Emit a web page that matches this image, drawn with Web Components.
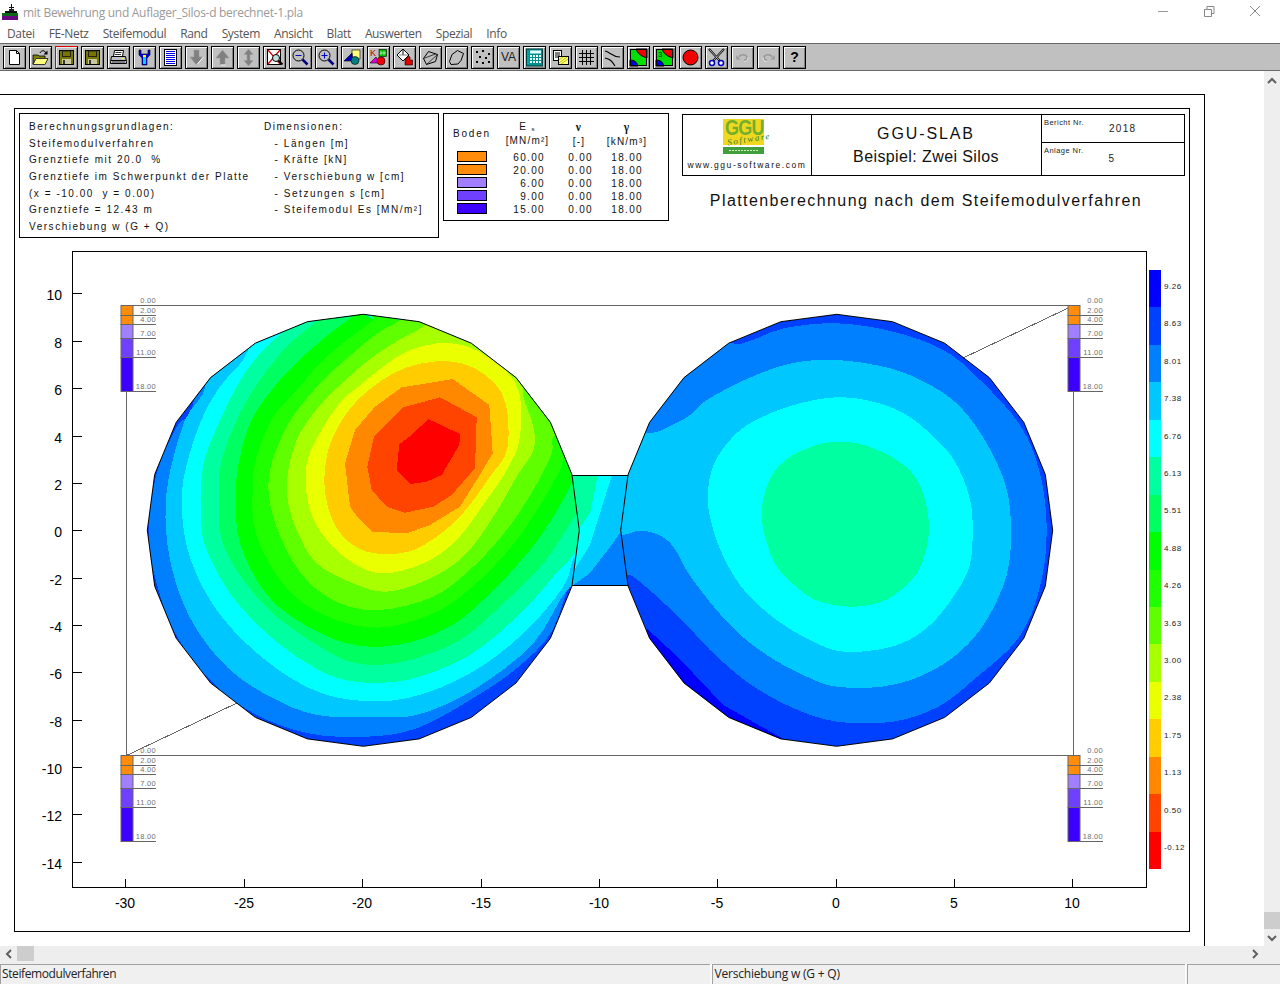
<!DOCTYPE html>
<html lang="de">
<head>
<meta charset="utf-8">
<title>mit Bewehrung und Auflager_Silos-d berechnet-1.pla</title>
<style>
html,body{margin:0;padding:0;height:100%;overflow:hidden;background:#fff}
</style>
</head>
<body>
<app-window>
  <title-bar slot="title" label="mit Bewehrung und Auflager_Silos-d berechnet-1.pla"></title-bar>
  <menu-bar slot="menu">
    <span>Datei</span><span>FE-Netz</span><span>Steifemodul</span><span>Rand</span><span>System</span><span>Ansicht</span><span>Blatt</span><span>Auswerten</span><span>Spezial</span><span>Info</span>
  </menu-bar>
  <tool-bar slot="tools"></tool-bar>
  <drawing-sheet slot="view">
    <info-box></info-box>
    <soil-table></soil-table>
    <title-block></title-block>
    <contour-plot></contour-plot>
  </drawing-sheet>
  <v-scroll slot="vscroll"></v-scroll>
  <h-scroll slot="hscroll"></h-scroll>
  <status-bar slot="status"></status-bar>
</app-window>
<script>
const def=(name,css,html,init)=>{
  customElements.define(name,class extends HTMLElement{
    constructor(){super();const r=this.attachShadow({mode:'open'});
      r.innerHTML='<style>'+css+'</style>'+(typeof html==='function'?html(this):html);}
    connectedCallback(){if(init)init(this);}
  });
};
const UI='"Open Sans","Noto Sans","Liberation Sans",sans-serif';
const AR='"Liberation Sans",Arial,sans-serif';

def('app-window',`:host{display:grid;width:1280px;height:984px;overflow:hidden;background:#fff;
  grid-template-columns:1264px 16px;grid-template-rows:22px 20px 29px 875px 18px 20px;
  grid-template-areas:"t t" "m m" "b b" "v s" "h h" "f f"}
  ::slotted([slot=title]){grid-area:t}::slotted([slot=menu]){grid-area:m}::slotted([slot=tools]){grid-area:b}
  ::slotted([slot=view]){grid-area:v}::slotted([slot=vscroll]){grid-area:s}::slotted([slot=hscroll]){grid-area:h}::slotted([slot=status]){grid-area:f}`,
  `<slot name="title"></slot><slot name="menu"></slot><slot name="tools"></slot><slot name="view"></slot><slot name="vscroll"></slot><slot name="hscroll"></slot><slot name="status"></slot>`);

def('title-bar',`:host{display:flex;align-items:center;background:#fff;font:12px ${UI};color:#9a9a9a;position:relative}
  svg{display:block;margin:1px 5px 0 2px}
  .t{flex:1;white-space:pre;letter-spacing:-.28px;padding-top:2px}
  .c{display:flex;gap:30px;margin-right:17px;align-items:center}`,
  h=>`<svg width="16" height="16" viewBox="0 0 16 16" shape-rendering="crispEdges">
    <rect x="9" y="0" width="1" height="8" fill="#111"/><rect x="7" y="3" width="5" height="1" fill="#111"/>
    <rect x="7" y="5" width="5" height="2" fill="#222"/><rect x="3" y="7" width="12" height="2" fill="#111"/>
    <rect x="0" y="9" width="16" height="3" fill="#0a6a1a"/><rect x="0" y="12" width="16" height="4" fill="#6a0a80"/></svg>
   <span class="t">${h.getAttribute('label')}</span>
   <span class="c">
    <svg width="16" height="16" viewBox="0 0 16 16" style="margin:0"><path d="M3 8.500h10" stroke="#999" fill="none"/></svg>
    <svg width="16" height="16" viewBox="0 0 16 16" style="margin:0"><path d="M3.500 6.500h7v7h-7zM6 6.500V3.500h7v7h-2.500" stroke="#888" fill="none"/></svg>
    <svg width="16" height="16" viewBox="0 0 16 16" style="margin:0"><path d="M3 3l10 10M13 3L3 13" stroke="#888" fill="none"/></svg>
   </span>`);

def('menu-bar',`:host{display:flex;gap:14px;align-items:center;padding:2px 0 0 7px;background:#fff;font:12px ${UI};letter-spacing:-.35px;color:#555;white-space:nowrap}`,`<slot></slot>`);

def('tool-button',`:host{box-sizing:border-box;width:23px;height:23px;border:1px solid #000;background:#c0c0c0;
   box-shadow:inset 1px 1px 0 #fff,inset -1px -1px 0 #808080;display:flex;align-items:center;justify-content:center}
  :host([hot]){border-top-color:#d00;border-left-color:#d00;box-shadow:inset 1px 1px 0 #e8e8e8,inset -1px -1px 0 #808080}`,`<slot></slot>`);

const I=(b)=>`<svg width="19" height="19" viewBox="0 0 19 19">${b}</svg>`;
const floppy=`<rect x="2.500" y="2.500" width="14" height="14" fill="#777700" stroke="#000"/><rect x="5.500" y="3" width="8" height="5.500" fill="#777700" stroke="#222"/><rect x="5" y="11" width="9" height="5" fill="#c8c8a0"/><rect x="6" y="12" width="2" height="4" fill="#333"/>`;
const colorMap=(n)=>`<rect x="1" y="1" width="17" height="17" fill="#00e000"/><path d="M7 1C9 6 12 8 18 10V1z" fill="#f00000" stroke="#000"/><path d="M1 12C5 12 8 14 9 18H1z" fill="#0000e0" stroke="#000"/><rect x="1.500" y="1.500" width="16" height="16" fill="none" stroke="#000"/>${n?'<text x="3" y="9" font-family="Liberation Sans" font-size="8" fill="#003000">3</text>':''}`;
const icons=[
 I(`<path d="M4.500 2.500h7l3 3v11h-10z" fill="#fff" stroke="#000"/><path d="M11.500 2.500v3h3" fill="none" stroke="#000"/>`),
 I(`<path d="M2 7h5l1 1h6v3H5L2 16z" fill="#808000" stroke="#000" stroke-width=".8"/><path d="M2 16.500l3-6h12l-3 6z" fill="#ffff80" stroke="#333"/><path d="M9 5c1-3 5-3 6 0" fill="none" stroke="#000"/><path d="M16.500 2.500v4h-4z" fill="#000"/>`),
 I(floppy),I(floppy),
 I(`<path d="M5.500 2.500h9l-1 6h-9z" fill="#fff" stroke="#000"/><path d="M6.500 4.500h6M6 6.500h6" stroke="#333"/><path d="M2.500 8.500h14l1 5v2h-16v-2z" fill="#c0c0c0" stroke="#000"/><path d="M2 12.500h15" stroke="#000"/><rect x="3" y="13" width="13" height="2" fill="#808080"/><rect x="13" y="10" width="2" height="1" fill="#ff0"/>`),
 I(`<path d="M4 2v5l3 3v7h5v-7l3-3V2h-2v4H6V2z" fill="#0000e0" stroke="#000" stroke-width=".6"/><rect x="8" y="9" width="3" height="7" fill="#00d0ff"/><rect x="8" y="7" width="3" height="2" fill="#ffff00"/>`),
 I(`<rect x="3.500" y="1.500" width="12" height="16" fill="#fff" stroke="#000"/><path d="M5 3.500h9M5 5.500h9M5 7.500h9M5 9.500h9M5 11.500h9M5 13.500h9M5 15.500h9" stroke="#0000e0"/>`),
 I(`<path d="M7 2h5v7h4l-6.500 8L3 9h4z" fill="#808080" stroke="#9a9a9a" stroke-width=".6"/><path d="M10 16.500L16.500 9" stroke="#fff" fill="none"/>`),
 I(`<path d="M9.500 2L16 10h-4v7H7v-7H3z" fill="#808080" stroke="#9a9a9a" stroke-width=".6"/><path d="M12.500 17h-5" stroke="#fff"/>`),
 I(`<path d="M9.500 1L14 6.500h-3v6h3L9.500 18 5 12.500h3v-6H5z" fill="#808080" stroke="#9a9a9a" stroke-width=".6"/>`),
 I(`<rect x="2.500" y="1.500" width="13" height="15" fill="#fff" stroke="#000"/><path d="M3 2l12 14M15 2L3 16" stroke="#d00000" stroke-width="1.200"/><circle cx="11" cy="10" r="3.500" fill="#c0e0e0" stroke="#000"/><path d="M13.500 12.500l4 4" stroke="#000" stroke-width="2"/>`),
 I(`<circle cx="7.500" cy="7.500" r="5.500" fill="#c0c0c0" stroke="#000"/><path d="M4.500 7.500h6" stroke="#0000c0"/><path d="M11.500 11.500l5 5" stroke="#000080" stroke-width="2.500"/>`),
 I(`<circle cx="7.500" cy="7.500" r="5.500" fill="#c0c0c0" stroke="#000"/><path d="M4.500 7.500h6M7.500 4.500v6" stroke="#0000c0"/><path d="M11.500 11.500l5 5" stroke="#000080" stroke-width="2.500"/>`),
 I(`<rect x="9" y="2" width="8" height="9" fill="#ffff80" stroke="#000" stroke-width=".6"/><path d="M1 13L9 5l1 8z" fill="#0000c0" stroke="#000" stroke-width=".6"/><circle cx="12" cy="12.500" r="4" fill="#008080" stroke="#000" stroke-width=".6"/>`),
 I(`<text x="1" y="8" font-family="Liberation Sans" font-size="9" fill="#c00000">K</text><rect x="10" y="1.500" width="7.500" height="7" fill="#00c000" stroke="#000" stroke-width=".6"/><path d="M12 3v4M15 3v4M11 5h6" stroke="#fff" stroke-width=".6"/><path d="M1 15l6-6 3 6z" fill="#e000e0" stroke="#000" stroke-width=".6"/><circle cx="12" cy="13" r="4" fill="#f00000" stroke="#000" stroke-width=".6"/>`),
 I(`<path d="M8 1l-6 6 6 6 6-6z" fill="#fff" stroke="#000"/><path d="M8 2v5" stroke="#000"/><path d="M13 8l2 1v3h2.500v5H10v-5z" fill="#e00000" stroke="#000" stroke-width=".6"/><path d="M4 7h9" stroke="#808080"/>`),
 I(`<path d="M2.500 10.500L7.500 3.500 16.500 6.500 14.500 13.500 5.500 16.500z" fill="none" stroke="#000"/><path d="M2.500 10.500L14.500 6 M5.500 16.500L16.500 6.500" fill="none" stroke="#000" stroke-width=".7"/>`),
 I(`<path d="M2.500 13.500L5 6.500 10.500 2.500 16.500 5.500 14 12.500 11 16 4 16.500z" fill="none" stroke="#000"/>`),
 I(`<g fill="#000"><rect x="3" y="3" width="2" height="2"/><rect x="9" y="2" width="2" height="2"/><rect x="15" y="5" width="2" height="2"/><rect x="6" y="8" width="2" height="2"/><rect x="12" y="9" width="2" height="2"/><rect x="3" y="13" width="2" height="2"/><rect x="9" y="14" width="2" height="2"/><rect x="15" y="13" width="2" height="2"/></g>`),
 `<span style="font:12px 'Liberation Sans',sans-serif;color:#222">VA</span>`,
 I(`<rect x="1.500" y="1" width="16" height="17" fill="#009090" stroke="#004040"/><rect x="5" y="2.500" width="11" height="3" fill="#e0ffff"/><g fill="#fff"><rect x="5" y="7" width="2" height="2"/><rect x="8" y="7" width="2" height="2"/><rect x="11" y="7" width="2" height="2"/><rect x="14" y="7" width="2" height="2"/><rect x="5" y="10" width="2" height="2"/><rect x="8" y="10" width="2" height="2"/><rect x="11" y="10" width="2" height="2"/><rect x="14" y="10" width="2" height="2"/><rect x="5" y="13" width="2" height="2"/><rect x="8" y="13" width="2" height="2"/><rect x="11" y="13" width="2" height="2"/><rect x="14" y="13" width="2" height="2"/></g><path d="M3 3v14" stroke="#00e0e0" stroke-dasharray="1 1"/>`),
 I(`<rect x="2.500" y="2.500" width="8" height="10" fill="#fff" stroke="#000"/><path d="M4 5h5M4 7h5M4 9h5" stroke="#000"/><rect x="7.500" y="8.500" width="10" height="8" fill="#ffff80" stroke="#000"/><path d="M8 15l8-6M10 16l7-5M8 12l4-3" stroke="#c0c000"/>`),
 I(`<path d="M5.500 2v15M9.500 2v15M13.500 2v15M2 5.500h15M2 9.500h15M2 13.500h15" stroke="#000"/>`),
 I(`<path d="M2 3c5 1 7 6 15 6M2 10c5 1 7 3 10 8" fill="none" stroke="#000" stroke-width="1.100"/>`),
 I(colorMap(0)),I(colorMap(1)),
 I(`<circle cx="9.500" cy="9.500" r="7.500" fill="#f00000" stroke="#000"/>`),
 I(`<path d="M2 1l11 12M17 1L6 13" stroke="#000" stroke-width="2"/><path d="M2.500 1.500l10 11M16.500 1.500l-10 11" stroke="#fff" stroke-width=".7"/><circle cx="5" cy="15" r="2.500" fill="#fff" stroke="#0000c0" stroke-width="1.500"/><circle cx="14" cy="15" r="2.500" fill="#fff" stroke="#0000c0" stroke-width="1.500"/>`),
 I(`<path d="M6 9c1-3 7-3 8 0 0 2-1 3-3 3.500" fill="none" stroke="#9a9a9a" stroke-width="1.500"/><path d="M3 7l4.500 4.500H3.500z" fill="#9a9a9a"/><path d="M11 13.500c2 0 4-1 4-4" fill="none" stroke="#e8e8e8"/>`),
 I(`<path d="M13 9c-1-3-7-3-8 0 0 2 1 3 3 3.500" fill="none" stroke="#9a9a9a" stroke-width="1.500"/><path d="M16 7l-4.500 4.500h4z" fill="#9a9a9a"/><path d="M8 13.500c-2 0-4-1-4-4" fill="none" stroke="#e8e8e8"/>`),
 `<span style="font:bold 14px 'Liberation Sans',sans-serif;color:#000">?</span>`
];
def('tool-bar',`:host{display:flex;gap:3px;align-items:center;box-sizing:border-box;background:#c0c0c0;border-top:1px solid #696969;border-bottom:1px solid #696969;padding:0 0 0 3px;margin-top:1px;height:28px}`,`<slot></slot>`,
 h=>{ if(h.children.length) return; icons.forEach((s,i)=>{const b=document.createElement('tool-button');if(i==2)b.setAttribute('hot','');b.innerHTML=s;h.appendChild(b);}); });

def('drawing-sheet',`:host{display:block;box-sizing:border-box;width:1205px;margin-top:23px;height:852px;border-top:1px solid #000;border-right:1px solid #000;padding:13px 14px 0}
  .frame{box-sizing:border-box;width:1176px;height:824px;border:1px solid #000;padding:4px 0 0 4px;display:grid;grid-template-columns:auto auto 1fr;align-content:start;align-items:start}
  ::slotted(soil-table){margin-left:4px}
  ::slotted(title-block){margin-left:13px}
  ::slotted(contour-plot){grid-column:1/-1;margin:12px 0 0 -4px}`,
  `<div class="frame"><slot></slot></div>`);

const infoL=['Berechnungsgrundlagen:','Steifemodulverfahren','Grenztiefe mit 20.0  %','Grenztiefe im Schwerpunkt der Platte','(x = -10.00  y = 0.00)','Grenztiefe = 12.43 m','Verschiebung w (G + Q)'];
const infoR=['Dimensionen:','  - Längen [m]','  - Kräfte [kN]','  - Verschiebung w [cm]','  - Setzungen s [cm]','  - Steifemodul Es [MN/m²]'];
def('info-box',`:host{display:grid;grid-template-columns:235px 1fr;box-sizing:border-box;width:420px;height:125px;border:1px solid #000;padding:5px 0 0 9px;font:10px/16.700px ${AR};letter-spacing:1.530px;color:#111;white-space:pre}
  div div{height:16.700px}
  .c2 div+div{margin-left:2px}`,
  `<div>${infoL.map(t=>`<div>${t}</div>`).join('')}</div><div class="c2">${infoR.map(t=>`<div>${t}</div>`).join('')}</div>`);

const soil=[['60.00','#ff8c0a'],['20.00','#ff8c0a'],['6.00','#a080ff'],['9.00','#7040ff'],['15.00','#3c00ff']];
def('soil-table',`:host{display:block;box-sizing:border-box;width:226px;height:108px;border:1px solid #000;padding-top:6px;font:10px/13px ${AR};letter-spacing:1.350px;color:#111}
  .g{display:grid;grid-template-columns:56px 55px 48px 48px}
  .h{height:28px;margin-bottom:2px;text-align:center;line-height:14px}
  .h>div:first-child{text-align:left;padding-left:9px;line-height:27px;letter-spacing:1.800px}
  .u{font-size:10px;letter-spacing:1.150px;white-space:nowrap;margin:0 -4px}
  .s{font:bold 11.500px/14px "Liberation Serif",serif}
  sub{font-size:6px;vertical-align:-1px;line-height:0}
  .r{height:13px;text-align:right;line-height:15px}
  .r b{display:block;box-sizing:border-box;width:30px;height:11px;margin:1px 0 0 13px;border:1px solid #000}
  .r span{display:block}
  .r>span:nth-child(2){padding-right:10px}.r>span:nth-child(3){padding-right:10px}.r>span:nth-child(4){padding-right:8px}`,
  `<div class="g h"><div>Boden</div><div>E <sub>s</sub><div class="u">[MN/m²]</div></div><div><span class="s">ν</span><div class="u">[-]</div></div><div><span class="s">γ</span><div class="u">[kN/m³]</div></div></div>`+
  soil.map(([e,c])=>`<div class="g r"><b style="background:${c}"></b><span>${e}</span><span>0.00</span><span>18.00</span></div>`).join(''));

def('title-block',`:host{display:block;width:503px;margin-top:1px;color:#111;font-family:${AR}}
  .b{box-sizing:border-box;height:62px;border:1px solid #000;display:grid;grid-template-columns:129px 230px 142px}
  .l{border-right:1px solid #000;display:flex;flex-direction:column;align-items:center;padding-top:4px;font-size:8.500px;letter-spacing:1.550px}
  .l svg{display:block;margin:0 6px 6px 0;overflow:visible}
  .m{border-right:1px solid #000;text-align:center;padding-top:9px}
  .m div:first-child{font-size:16px;letter-spacing:1.900px;line-height:19px;margin-right:1px}
  .m div:last-child{font-size:16px;letter-spacing:.4px;line-height:20px;margin-top:4px;margin-right:1px}
  .r{display:grid;grid-template-rows:28px 30px}
  .r>div{padding:3px 0 0 2px;font-size:7.500px;letter-spacing:.450px;line-height:9px;color:#222;display:flex}
  .r>div:first-child{border-bottom:1px solid #000}
  .r span{font-size:10px;letter-spacing:1.300px;margin-left:25px;line-height:22px}
  .r>div:last-child span{line-height:22px;margin-left:25px;padding-top:2px}
  h2{font:400 16px/20px ${AR};letter-spacing:1.420px;margin:15px 15px 0 0;text-align:center;white-space:nowrap}`,
  `<div class="b"><div class="l">
    <svg width="42" height="35" viewBox="0 0 42 35"><rect x="0" y="0" width="41" height="26" fill="#f0d820"/><rect x="0" y="28" width="41" height="7" fill="#3f9f3a"/><path d="M6 31.500h30" stroke="#d8f0c0" stroke-dasharray="2 1"/>
      <text x="0" y="16" font-family="Liberation Sans" font-weight="700" font-size="22" letter-spacing="-1" fill="#72b02c" transform="translate(2 0) scale(.82 1)">GGU</text>
      <text x="4" y="24" font-family="Liberation Serif" font-style="italic" font-size="9" fill="#2f7f2a" transform="rotate(-9 20 20)">Software</text></svg>
    <div>www.ggu-software.com</div></div>
    <div class="m"><div>GGU-SLAB</div><div>Beispiel: Zwei Silos</div></div>
    <div class="r"><div>Bericht Nr.<span>2018</span></div><div>Anlage Nr.<span>5</span></div></div></div>
   <h2>Plattenberechnung nach dem Steifemodulverfahren</h2>`);

/* ---------- contour plot -------------- */
const gon=(cx,cy,r)=>Array.from({length:24},(_,i)=>{const a=i*Math.PI/12;return [cx+r*Math.sin(a),cy-r*Math.cos(a)]});
const P=a=>a.map(p=>p[0].toFixed(1)+','+p[1].toFixed(1)).join(' ');
const Lc=a=>{const o=[];for(let i=0;i<a.length;i+=2)o.push([140+a[i]/3,310+a[i+1]/3]);return o};
const Rc=a=>{const o=[];for(let i=0;i<a.length;i+=2)o.push([610+a[i]/3,310+a[i+1]/3]);return o};
const smooth=(a,n=4)=>{const o=[],L=a.length;for(let i=0;i<L;i++){const p0=a[(i-1+L)%L],p1=a[i],p2=a[(i+1)%L],p3=a[(i+2)%L];
  const far=Math.hypot(p2[0]-p1[0],p2[1]-p1[1])>90;
  for(let j=0;j<n;j++){const t=j/n,t2=t*t,t3=t2*t;
    if(far){o.push([p1[0]+(p2[0]-p1[0])*t,p1[1]+(p2[1]-p1[1])*t]);continue;}
    o.push([0,1].map(k=>.5*(2*p1[k]+(p2[k]-p0[k])*t+(2*p0[k]-5*p1[k]+4*p2[k]-p3[k])*t2+(3*p1[k]-p0[k]-3*p2[k]+p3[k])*t3)));}}
  return o;};
const C=['#0000ff','#0040ff','#0080ff','#00c8ff','#00ffff','#00ffa0','#00ff60','#00ff00','#20ff00','#60ff00','#a8ff00','#eaff00','#ffcc00','#ff8800','#ff4400','#ff0000'];
const leftBands=[
 [2,[40,780,100,960,215,1115,345,1212,505,1270,680,1280,830,1255,990,1170,1130,1075,1235,965,1300,800,1400,700,1400,-50,200,-50,160,280,110,350,50,490,26,660]],
 [3,[200,215,135,330,85,510,78,660,105,810,165,950,265,1075,390,1160,530,1215,700,1220,830,1215,1000,1140,1180,1000,1290,830,1400,800,1400,-50,200,-50]],
 [4,[325,120,240,230,180,340,130,510,130,650,160,770,230,900,340,1020,480,1120,620,1168,800,1165,990,1090,1150,970,1270,830,1310,730,1400,700,1400,-50,340,-50]],
 [5,[430,65,360,130,290,230,210,400,185,500,183,630,200,720,270,850,380,970,510,1065,630,1113,800,1110,980,1040,1120,930,1240,800,1330,670,1400,300,600,-20,440,50]],
 [6,[530,35,440,110,360,210,295,320,245,450,236,560,245,690,310,810,410,920,540,1010,650,1060,790,1055,960,990,1090,880,1210,760,1290,640,1320,590,1400,400,600,-20]],
 [7,[640,18,570,70,500,130,420,210,340,320,300,440,287,560,300,700,370,840,470,930,620,1000,770,1005,930,950,1060,840,1170,720,1240,620,1300,510,1350,400,650,0]],
 [8,[700,30,620,90,540,160,470,240,400,320,350,440,338,540,345,660,400,780,490,880,620,940,750,950,900,900,1020,810,1130,690,1210,570,1260,480,1275,440,1350,350,720,0]],
 [9,[790,25,720,65,650,120,560,200,480,290,430,370,390,480,390,580,430,700,500,810,600,880,720,900,880,860,1000,770,1100,660,1180,540,1235,430,1240,380,1300,300,1100,100,800,0]],
 [10,[850,50,760,100,680,155,590,235,520,310,470,390,445,480,443,570,470,660,530,760,640,820,740,845,860,810,970,740,1060,620,1130,500,1180,420,1180,350,1150,260,1140,190,1010,90,870,30]],
 [11,[810,120,655,230,590,290,520,405,497,490,510,600,560,690,640,760,730,790,850,760,950,690,1040,570,1100,480,1140,380,1125,215,975,107]],
 [12,[800,172,655,268,575,390,553,510,570,610,610,680,680,725,780,730,860,700,960,620,1050,500,1103,410,1085,248,965,160]],
 [13,[850,222,785,232,705,290,645,360,615,460,630,590,655,625,695,665,800,670,870,645,960,590,1010,510,1058,430,1048,285,938,207]],
 [14,[900,262,790,292,702,380,682,470,695,540,740,590,795,608,880,590,935,555,1005,475,1010,322]],
 [15,[865,327,815,375,778,403,770,480,810,522,860,515,905,495,958,405,960,372]]
];
const rightBands=[
 [0,[110,955,175,1015,250,1090,340,1185,525,1290,350,1300,100,1100]],
 [2,[-100,810,-100,-50,300,-50,360,100,520,55,680,40,850,65,1000,120,1110,210,1230,345,1290,490,1310,660,1290,830,1225,985,1090,1110,985,1190,850,1235,680,1235,540,1190,410,1115,300,1020,230,945,130,850,60,795,35,810]],
 [3,[-100,370,110,370,175,350,240,315,290,270,415,205,545,160,680,150,840,175,960,225,1050,290,1130,400,1188,530,1203,660,1190,795,1130,930,1050,1025,940,1095,815,1130,680,1130,590,1100,470,1035,360,945,245,805,190,710,140,672,85,663,35,675,-100,680]],
 [4,[680,262,570,280,470,315,385,365,315,455,293,560,310,660,350,760,410,850,500,930,590,985,680,1022,780,1022,875,1000,960,945,1030,860,1078,770,1088,660,1078,560,1035,455,975,385,890,315,790,275]],
 [5,[680,395,620,405,550,435,500,475,470,530,455,605,465,680,500,770,570,840,630,875,720,890,800,880,860,850,920,790,948,720,957,650,945,570,915,500,860,450,790,415,740,400]]
];
const bridge=[
 [2,[[560,470],[640,470],[640,590],[560,590]]],
 [3,[[629,521],[610,547],[590,573],[572,586],[560,470],[640,470]]],
 [4,[[612,475],[590,545],[574,570],[560,570],[560,470]]],
 [5,[[598,475],[590,513],[578,530],[560,530],[560,470]]]
];
const ply=(k,pts)=>`<polygon fill="${C[k]}" points="${P(pts)}"/>`;
const lgon=gon(363.300,530.300,216),rgon=gon(836.700,530.300,216);
const bore=(x,t)=>{
  const ys=[t,t+9.5,t+18.5,t+33,t+52,t+86];
  const cols=['#ff8c0a','#ff8c0a','#a080ff','#7040ff','#3c00ff'];
  const lab=['0.00','2.00','4.00','7.00','11.00','18.00'];
  const w=12,l=36;
  let s='';
  cols.forEach((c,i)=>s+=`<rect x="${x+.5}" y="${Math.round(ys[i])+.5}" width="${w}" height="${Math.round(ys[i+1])-Math.round(ys[i])}" fill="${c}" stroke="#666"/>`);
  ys.forEach((y,i)=>{const Y=Math.round(y)+.5;if(i)s+=`<path d="M${x+w} ${Y}H${x+l-.500}" stroke="#666" fill="none"/>`;
    s+=`<text x="${x+l-.500}" y="${Y-2.200}" text-anchor="end" class="bl">${lab[i]}</text>`});
  return s;
};
function plotSVG(){
  let s='';
  s+=`<rect x="72.500" y="251.500" width="1074" height="636" fill="none" stroke="#000"/>`;
  for(let v=10;v>=-14;v-=2){const y=Math.round(530.3-v*23.68)+.5;
    s+=`<path d="M73 ${y}H82" stroke="#000"/><text x="62" y="${y+6.5}" text-anchor="end" class="ax">${v}</text>`;}
  for(let v=-30;v<=10;v+=5){const x=Math.round(836.7+v*23.675)-.5;
    s+=`<path d="M${x} 888V879" stroke="#000"/><text x="${x-.5}" y="908" text-anchor="middle" class="ax">${v}</text>`;}
  s+=`<g fill="none" stroke="#666" shape-rendering="crispEdges"><path d="M126.500 305.500H1073.500V755.500H126.500Z"/><path d="M1073.500 305.500L126.500 755.500"/></g>`;
  s+=bore(120.500,305)+bore(1067.500,305)+bore(120.500,755)+bore(1067.500,755);
  s+=`<g clip-path="url(#cb)" shape-rendering="crispEdges">`+bridge.map(([k,p])=>ply(k,p)).join('')+`</g>`;
  s+=`<path d="M572 475.500H629M572 585.500H629" stroke="#000" fill="none" shape-rendering="crispEdges"/>`;
  s+=`<g clip-path="url(#cl)" shape-rendering="crispEdges"><polygon fill="${C[1]}" points="${P(lgon)}"/>`+leftBands.map(([k,a])=>ply(k,k<=12?smooth(Lc(a)):Lc(a))).join('')+`</g>`;
  s+=`<polygon fill="none" stroke="#000" points="${P(lgon)}"/>`;
  s+=`<g clip-path="url(#cr)" shape-rendering="crispEdges"><polygon fill="${C[1]}" points="${P(rgon)}"/>`+rightBands.map(([k,a])=>ply(k,k?smooth(Rc(a)):Rc(a))).join('')+`</g>`;
  s+=`<polygon fill="none" stroke="#000" points="${P(rgon)}"/>`;
  const vals=['9.26','8.63','8.01','7.38','6.76','6.13','5.51','4.88','4.26','3.63','3.00','2.38','1.75','1.13','0.50','-0.12'];
  vals.forEach((v,i)=>{const y=270+i*37.44;
    s+=`<rect x="1149" y="${y.toFixed(1)}" width="12" height="38" fill="${C[i]}" shape-rendering="crispEdges"/>`;});
  s+=`<rect x="1149" y="869" width="12" height="2" fill="#fff"/>`;
  vals.forEach((v,i)=>{s+=`<text x="1164" y="${(289+i*37.4).toFixed(1)}" class="lg">${v}</text>`;});
  return s;
}
def('contour-plot',`:host{display:block;width:1174px;height:681px}
  svg{display:block;font-family:${AR}}
  .ax{font-size:14px;fill:#000}
  .bl{font-size:7.500px;letter-spacing:.3px;fill:#707070}
  .lg{font-size:8px;letter-spacing:.55px;fill:#222}`,
  ()=>`<svg width="1174" height="681" viewBox="15 250 1174 681">
    <defs><clipPath id="cl"><polygon points="${P(lgon)}"/></clipPath><clipPath id="cr"><polygon points="${P(rgon)}"/></clipPath><clipPath id="cb"><rect x="572" y="475" width="57" height="111"/></clipPath></defs>
    ${plotSVG()}</svg>`);

const chev=(d)=>`<svg width="10" height="10" viewBox="0 0 10 10"><path d="${d}" fill="none" stroke="#606060" stroke-width="2"/></svg>`;
def('v-scroll',`:host{display:flex;flex-direction:column;align-items:center;background:#eee;width:16px;height:875px}
  .a{height:17px;display:flex;align-items:center;justify-content:center;margin-top:1px}
  .sp{flex:1}.th{width:16px;height:17px;background:#cdcdcd}`,
  `<div class="a">${chev('M1 7L5 3l4 4')}</div><div class="sp"></div><div class="th"></div><div class="a" style="height:17px;margin:0">${chev('M1 3l4 4 4-4')}</div>`);
def('h-scroll',`:host{display:flex;align-items:flex-start;background:#eee;height:18px}
  .a{width:17px;height:15px;display:flex;align-items:center;justify-content:center}
  .th{width:17px;height:15px;background:#cdcdcd}.sp{flex:1}`,
  `<div class="a">${chev('M7 1L3 5l4 4')}</div><div class="th"></div><div class="sp"></div><div class="a" style="width:17px;margin-right:17px">${chev('M3 1l4 4-4 4')}</div>`);
def('status-bar',`:host{display:grid;grid-template-columns:710px 474px 93px;gap:0 1.500px;background:#f0f0f0;font:12px ${UI};color:#222}
  div{box-sizing:border-box;border-top:1px solid #a0a0a0;height:20px;padding-left:1px;line-height:17px;letter-spacing:-.4px;white-space:nowrap;border-left:1px solid #a0a0a0}
  div:first-child{border-left:0}div+div{box-shadow:-2px 0 0 #fafafa;padding-left:2px;letter-spacing:-.2px}`,
  `<div>Steifemodulverfahren</div><div>Verschiebung w (G + Q)</div><div></div>`);
</script>
</body>
</html>
